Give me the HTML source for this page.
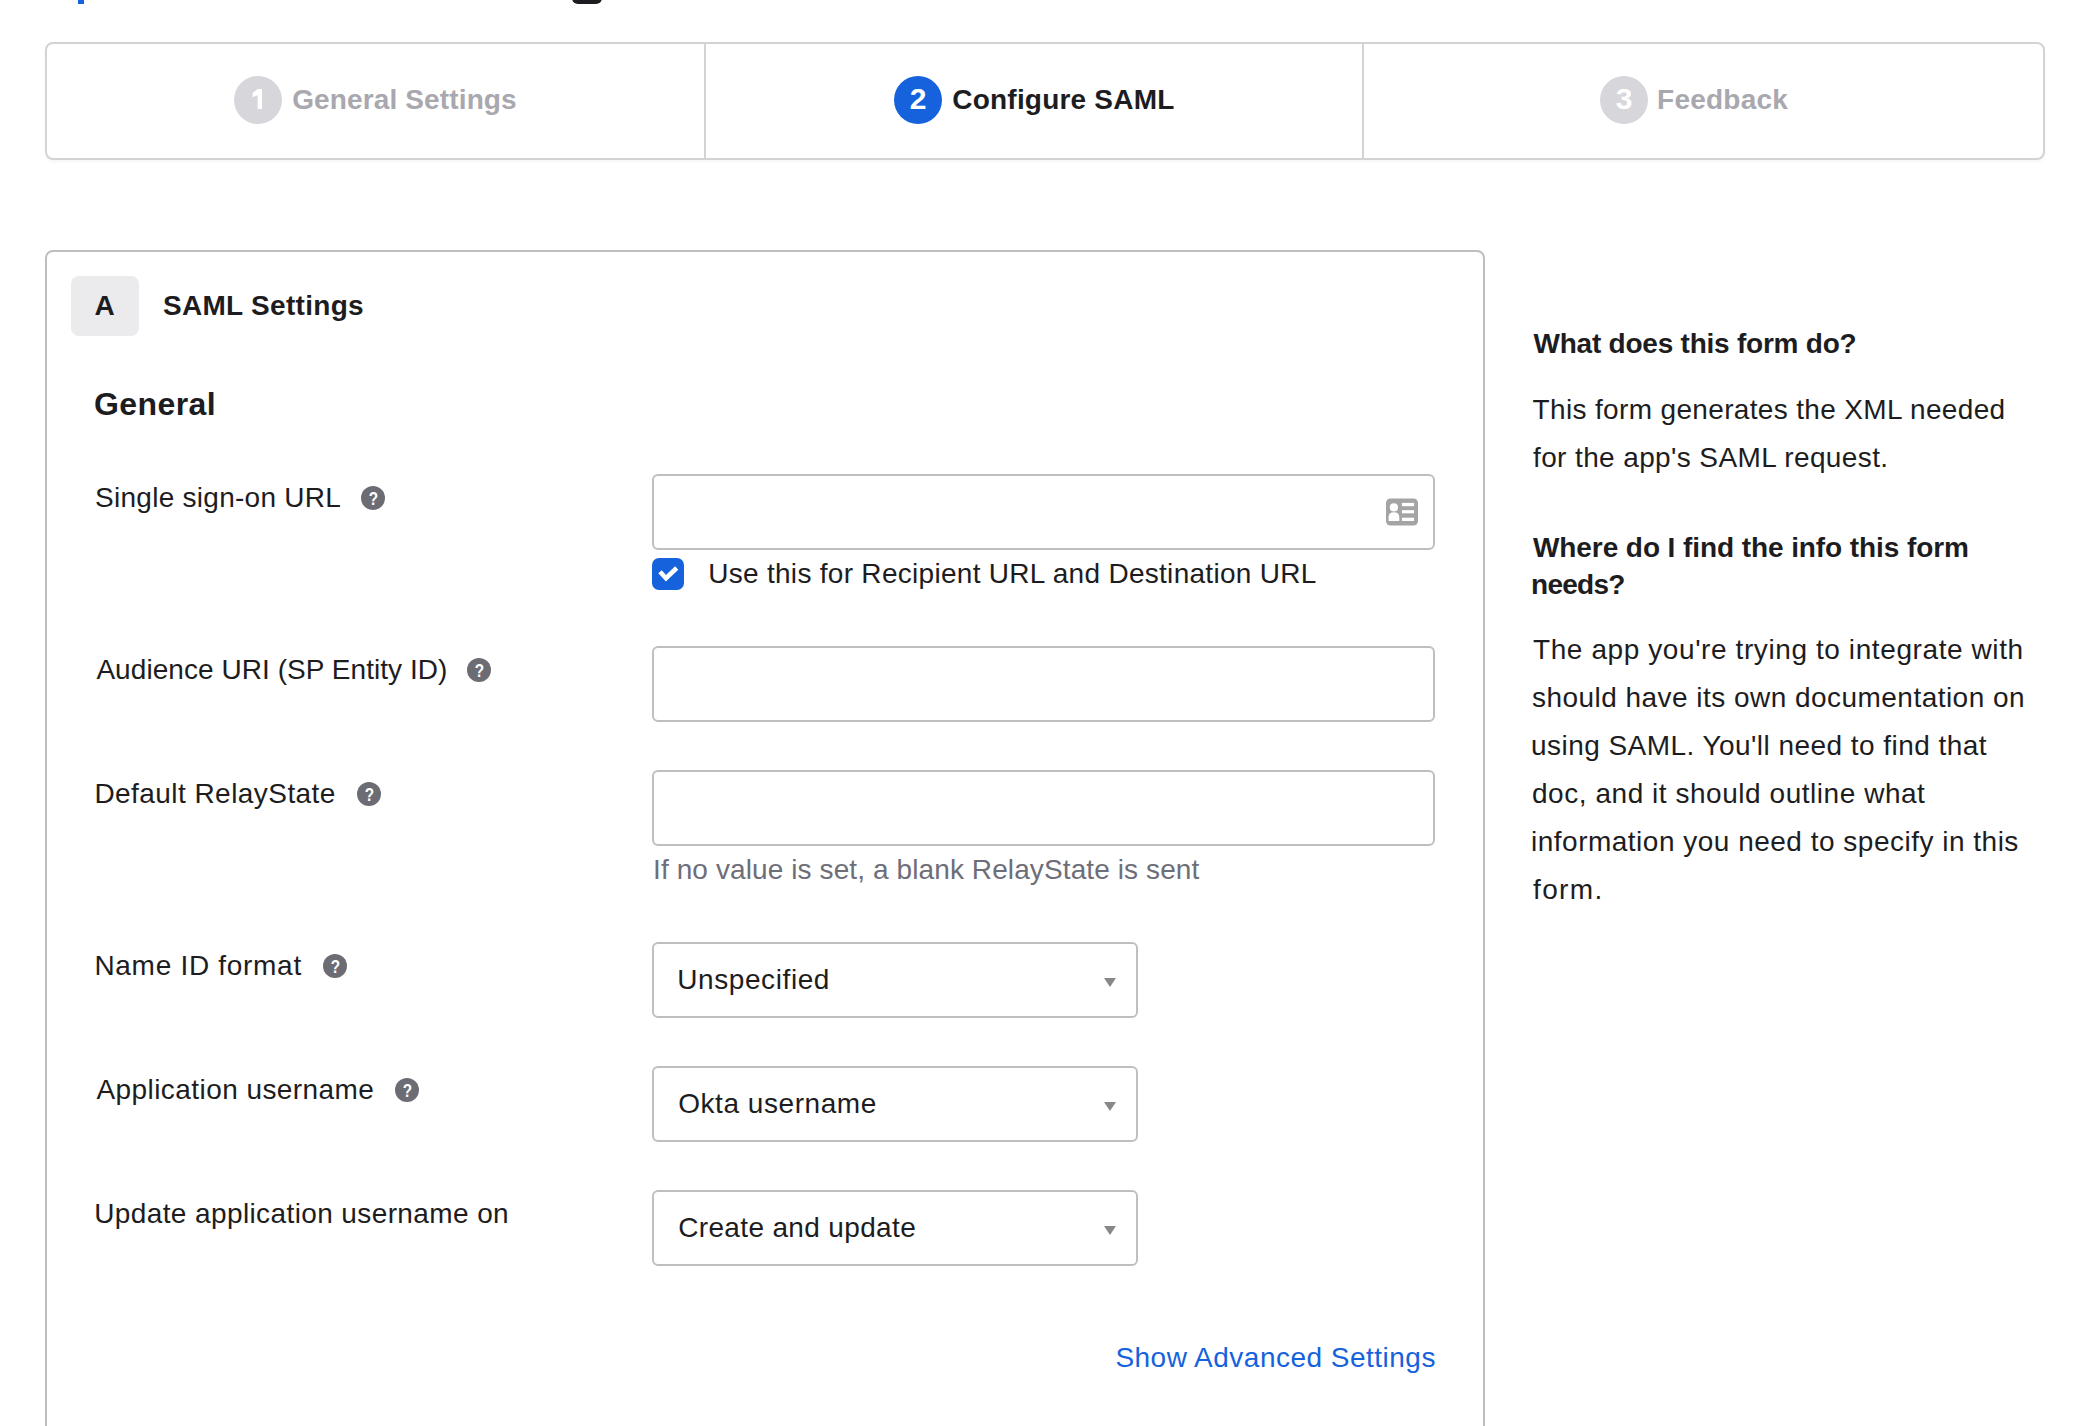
<!DOCTYPE html>
<html>
<head>
<meta charset="utf-8">
<style>
html,body{margin:0;padding:0;background:#fff;}
body{width:2092px;height:1426px;position:relative;overflow:hidden;font-family:"Liberation Sans",sans-serif;color:#1d1d21;}
.t{position:absolute;white-space:nowrap;line-height:1;}
.steps{position:absolute;left:45px;top:42px;width:1996px;height:114px;border:2px solid #d3d3d3;border-radius:8px;box-shadow:0 2px 3px rgba(0,0,0,0.04);}
.dv{position:absolute;top:44px;width:2px;height:114px;background:#d3d3d3;}
.circ{position:absolute;width:48px;height:48px;border-radius:50%;background:#d6d6db;}
.circ span{position:absolute;left:0;width:48px;top:8px;text-align:center;color:#fff;font-weight:bold;font-size:30px;line-height:1;}
.card{position:absolute;left:45px;top:250px;width:1436px;height:1300px;border:2px solid #bebebe;border-radius:8px;}
.inp{position:absolute;left:652px;width:779px;height:72px;border:2px solid #bfbfbf;border-radius:6px;background:#fff;}
.sel{position:absolute;left:652px;width:482px;height:72px;border:2px solid #bfbfbf;border-radius:6px;background:#fff;}
.arrow{position:absolute;left:450px;top:34px;width:0;height:0;border-left:6px solid transparent;border-right:6px solid transparent;border-top:9px solid #888;}
.help{position:absolute;width:24px;height:24px;border-radius:50%;background:#6c6c74;}
</style>
</head>
<body>
<div style="position:absolute;left:78px;top:0;width:6px;height:4px;background:#1662dd;"></div>
<div style="position:absolute;left:572px;top:-10px;width:30px;height:14px;background:#1d1d21;border-radius:6px;"></div>
<div class="steps"></div><div class="dv" style="left:704px;"></div><div class="dv" style="left:1362px;"></div>
<div class="circ" style="left:234px;top:76px;"><svg style="position:absolute;left:0;top:0" width="48" height="48" viewBox="0 0 48 48"><path d="M23.6 13.1 L28 13.1 L28 33.1 L23.6 33.1 L23.6 19.2 L18.6 21.2 L18.6 17.0 Z" fill="#fff"/></svg></div>
<div class="circ" style="left:894px;top:76px;background:#1662dd;"><span>2</span></div>
<div class="circ" style="left:1600px;top:76px;"><span>3</span></div>
<div class="card"></div>
<div style="position:absolute;left:71px;top:276px;width:68px;height:60px;border-radius:8px;background:#ebebed;"></div>
<div class="inp" style="top:474px;"></div>
<div class="inp" style="top:646px;"></div>
<div class="inp" style="top:770px;"></div>
<svg style="position:absolute;left:1386px;top:498px;" width="32" height="28" viewBox="0 0 32 28">
<rect x="0" y="0.5" width="32" height="27" rx="4.5" fill="#a4a4a4"/>
<circle cx="7.9" cy="9.4" r="4.1" fill="#fff"/>
<path d="M2.6 23 L2.6 19.3 Q2.6 14.2 8 14.2 Q13.3 14.2 13.3 19.3 L13.3 23 Z" fill="#fff"/>
<rect x="15.9" y="4.9" width="12.2" height="3.3" fill="#fff"/>
<rect x="15.9" y="12.2" width="12.2" height="3.1" fill="#fff"/>
<rect x="15.9" y="19.7" width="12.2" height="3.3" fill="#fff"/>
</svg>
<svg style="position:absolute;left:652px;top:558px;" width="32" height="32" viewBox="0 0 32 32">
<rect x="0" y="0" width="32" height="32" rx="7" fill="#1662dd"/>
<polyline points="8,13.8 14,20.2 24.7,10" fill="none" stroke="#fff" stroke-width="4.6" stroke-linecap="butt" stroke-linejoin="miter"/>
</svg>
<div class="sel" style="top:942px;"><div class="arrow"></div></div>
<div class="sel" style="top:1066px;"><div class="arrow"></div></div>
<div class="sel" style="top:1190px;"><div class="arrow"></div></div>
<svg style="position:absolute;left:361px;top:486px;" width="24" height="24" viewBox="0 0 24 24"><circle cx="12" cy="12" r="12" fill="#6c6c74"/><text x="0" y="0" transform="translate(12.3,18.5) scale(0.85,1)" text-anchor="middle" font-family="Liberation Sans" font-weight="bold" font-size="18" fill="#fff">?</text></svg>
<svg style="position:absolute;left:467.3px;top:658px;" width="24" height="24" viewBox="0 0 24 24"><circle cx="12" cy="12" r="12" fill="#6c6c74"/><text x="0" y="0" transform="translate(12.3,18.5) scale(0.85,1)" text-anchor="middle" font-family="Liberation Sans" font-weight="bold" font-size="18" fill="#fff">?</text></svg>
<svg style="position:absolute;left:356.5px;top:782px;" width="24" height="24" viewBox="0 0 24 24"><circle cx="12" cy="12" r="12" fill="#6c6c74"/><text x="0" y="0" transform="translate(12.3,18.5) scale(0.85,1)" text-anchor="middle" font-family="Liberation Sans" font-weight="bold" font-size="18" fill="#fff">?</text></svg>
<svg style="position:absolute;left:323px;top:954px;" width="24" height="24" viewBox="0 0 24 24"><circle cx="12" cy="12" r="12" fill="#6c6c74"/><text x="0" y="0" transform="translate(12.3,18.5) scale(0.85,1)" text-anchor="middle" font-family="Liberation Sans" font-weight="bold" font-size="18" fill="#fff">?</text></svg>
<svg style="position:absolute;left:395.3px;top:1078px;" width="24" height="24" viewBox="0 0 24 24"><circle cx="12" cy="12" r="12" fill="#6c6c74"/><text x="0" y="0" transform="translate(12.3,18.5) scale(0.85,1)" text-anchor="middle" font-family="Liberation Sans" font-weight="bold" font-size="18" fill="#fff">?</text></svg>
<div class="t" id="gs" style="left:292.20px;top:86.00px;font-size:28px;color:#a8a8ae;font-weight:bold;letter-spacing:0.132px;">General Settings</div>
<div class="t" id="cs" style="left:952.30px;top:86.00px;font-size:28px;color:#1d1d21;font-weight:bold;letter-spacing:0.208px;">Configure SAML</div>
<div class="t" id="fb" style="left:1657.10px;top:86.00px;font-size:28px;color:#a8a8ae;font-weight:bold;letter-spacing:0.232px;">Feedback</div>
<div class="t" id="A" style="left:94.60px;top:292.00px;font-size:28px;color:#1d1d21;font-weight:bold;letter-spacing:1.080px;">A</div>
<div class="t" id="saml" style="left:163.00px;top:292.00px;font-size:28px;color:#1d1d21;font-weight:bold;letter-spacing:0.300px;">SAML Settings</div>
<div class="t" id="gen" style="left:94.10px;top:388.00px;font-size:32px;color:#1d1d21;font-weight:bold;letter-spacing:0.390px;">General</div>
<div class="t" id="l1" style="left:95.00px;top:484.00px;font-size:28px;color:#1d1d21;letter-spacing:0.275px;">Single sign-on URL</div>
<div class="t" id="l2" style="left:96.40px;top:656.00px;font-size:28px;color:#1d1d21;letter-spacing:0.055px;">Audience URI (SP Entity ID)</div>
<div class="t" id="l3" style="left:94.40px;top:780.00px;font-size:28px;color:#1d1d21;letter-spacing:0.445px;">Default RelayState</div>
<div class="t" id="l4" style="left:94.40px;top:952.00px;font-size:28px;color:#1d1d21;letter-spacing:0.707px;">Name ID format</div>
<div class="t" id="l5" style="left:96.40px;top:1076.00px;font-size:28px;color:#1d1d21;letter-spacing:0.436px;">Application username</div>
<div class="t" id="l6" style="left:94.20px;top:1200.00px;font-size:28px;color:#1d1d21;letter-spacing:0.391px;">Update application username on</div>
<div class="t" id="use" style="left:708.20px;top:560.00px;font-size:28px;color:#1d1d21;letter-spacing:0.292px;">Use this for Recipient URL and Destination URL</div>
<div class="t" id="ifno" style="left:653.00px;top:856.00px;font-size:28px;color:#6e6e78;letter-spacing:0.104px;">If no value is set, a blank RelayState is sent</div>
<div class="t" id="s1" style="left:677.20px;top:966.00px;font-size:28px;color:#1d1d21;letter-spacing:0.594px;">Unspecified</div>
<div class="t" id="s2" style="left:678.20px;top:1090.00px;font-size:28px;color:#1d1d21;letter-spacing:0.555px;">Okta username</div>
<div class="t" id="s3" style="left:678.20px;top:1214.00px;font-size:28px;color:#1d1d21;letter-spacing:0.349px;">Create and update</div>
<div class="t" id="adv" style="left:1115.40px;top:1344.00px;font-size:28px;color:#1662dd;letter-spacing:0.489px;">Show Advanced Settings</div>
<div class="t" id="r1" style="left:1533.50px;top:330.00px;font-size:28px;color:#1d1d21;font-weight:bold;letter-spacing:-0.229px;">What does this form do?</div>
<div class="t" id="r2" style="left:1532.60px;top:396.00px;font-size:28px;color:#1d1d21;letter-spacing:0.344px;">This form generates the XML needed</div>
<div class="t" id="r3" style="left:1533.00px;top:444.00px;font-size:28px;color:#1d1d21;letter-spacing:0.381px;">for the app's SAML request.</div>
<div class="t" id="r4" style="left:1533.00px;top:534.00px;font-size:28px;color:#1d1d21;font-weight:bold;letter-spacing:-0.082px;">Where do I find the info this form</div>
<div class="t" id="r5" style="left:1531.00px;top:571.00px;font-size:28px;color:#1d1d21;font-weight:bold;letter-spacing:-0.720px;">needs?</div>
<div class="t" id="r6" style="left:1533.00px;top:636.00px;font-size:28px;color:#1d1d21;letter-spacing:0.592px;">The app you're trying to integrate with</div>
<div class="t" id="r7" style="left:1532.00px;top:684.00px;font-size:28px;color:#1d1d21;letter-spacing:0.463px;">should have its own documentation on</div>
<div class="t" id="r8" style="left:1531.00px;top:732.00px;font-size:28px;color:#1d1d21;letter-spacing:0.452px;">using SAML. You'll need to find that</div>
<div class="t" id="r9" style="left:1532.00px;top:780.00px;font-size:28px;color:#1d1d21;letter-spacing:0.540px;">doc, and it should outline what</div>
<div class="t" id="r10" style="left:1531.00px;top:828.00px;font-size:28px;color:#1d1d21;letter-spacing:0.497px;">information you need to specify in this</div>
<div class="t" id="r11" style="left:1533.00px;top:876.00px;font-size:28px;color:#1d1d21;letter-spacing:1.351px;">form.</div>
</body>
</html>
